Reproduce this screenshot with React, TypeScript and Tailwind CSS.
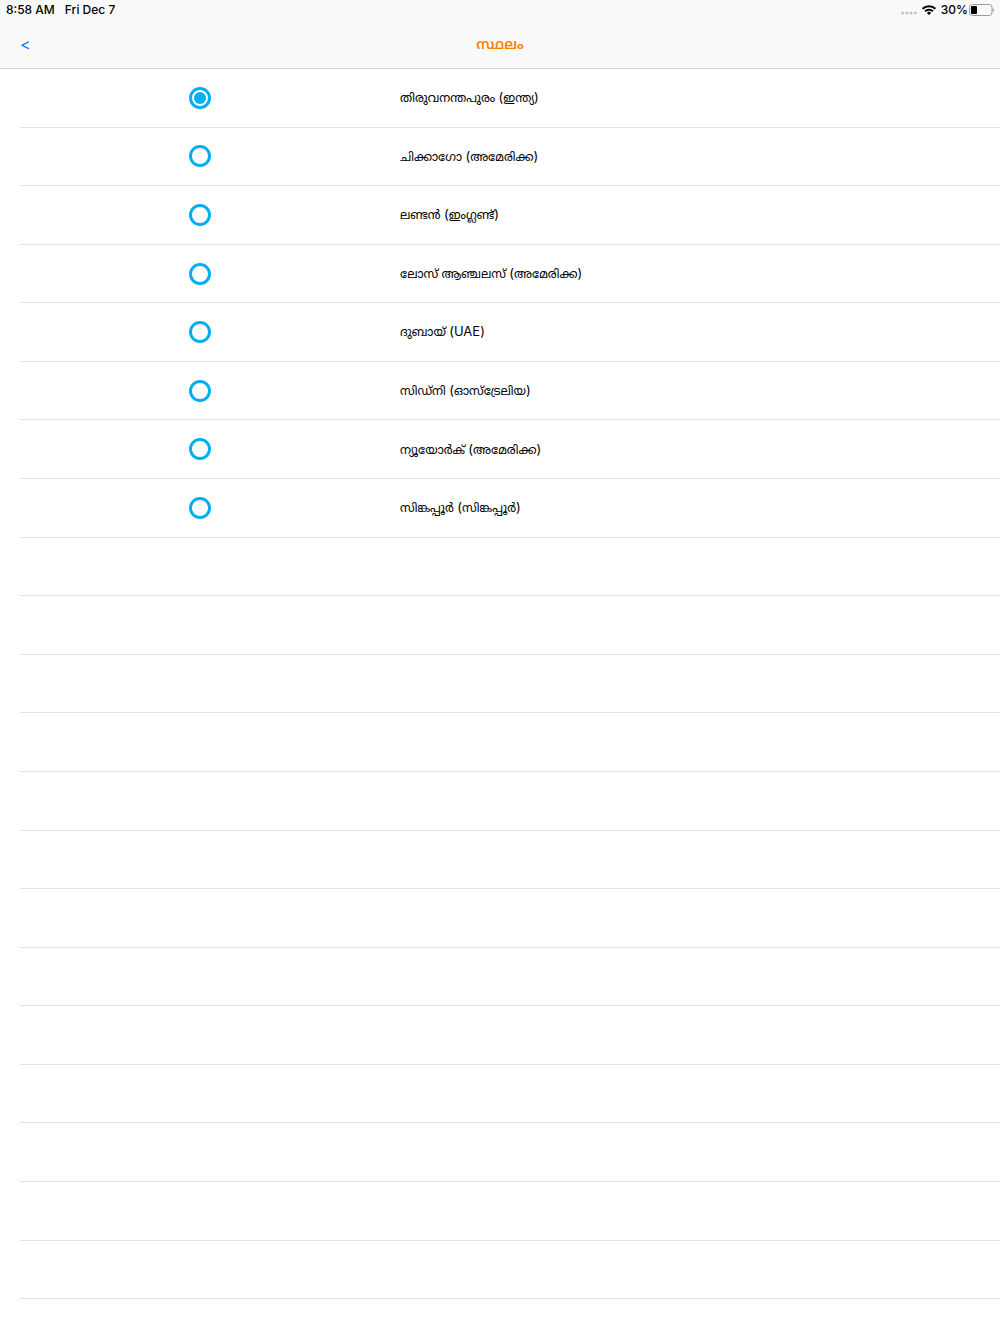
import { useState } from 'react';

const places = [
  { city: 'തിരുവനന്തപുരം', country: 'ഇന്ത്യ' },
  { city: 'ചിക്കാഗോ', country: 'അമേരിക്ക' },
  { city: 'ലണ്ടൻ', country: 'ഇംഗ്ലണ്ട്' },
  { city: 'ലോസ് ആഞ്ചലസ്', country: 'അമേരിക്ക' },
  { city: 'ദുബായ്', country: 'UAE', latin: true },
  { city: 'സിഡ്നി', country: 'ഓസ്ട്രേലിയ' },
  { city: 'ന്യൂയോർക്', country: 'അമേരിക്ക' },
  { city: 'സിങ്കപ്പൂർ', country: 'സിങ്കപ്പൂർ' },
];

const ROW_COUNT = 21;

const StatusBar = () => (
  <div className="flex h-5 items-center justify-between px-1.5 text-xs font-medium text-black">
    <div className="flex gap-2.5">
      <span>8:58 AM</span>
      <span>Fri Dec 7</span>
    </div>
    <div className="flex items-center gap-1">
      <svg className="mt-1.5 h-1 w-4" viewBox="0 0 16 4" fill="#c4c4c4">
        <circle cx="1.7" cy="2" r="1.6" />
        <circle cx="5.9" cy="2" r="1.6" />
        <circle cx="10.1" cy="2" r="1.6" />
        <circle cx="14.3" cy="2" r="1.6" />
      </svg>
      <svg className="h-2.5 w-4" viewBox="0 0 16 10" fill="none" stroke="#000" strokeWidth="1.9">
        <path d="M1.6 3.8a9.2 9.2 0 0 1 12.8 0" />
        <path d="M4.1 6.3a5.6 5.6 0 0 1 7.8 0" />
        <path d="M8 10 5.9 7.9a3 3 0 0 1 4.2 0z" fill="#000" stroke="none" />
      </svg>
      <div className="flex items-center gap-px">
        <span>30%</span>
        <svg className="h-3 w-[25px]" viewBox="0 0 25 12">
          <rect x="0.5" y="0.5" width="22.5" height="11" rx="2.8" fill="none" stroke="#9a9a9a" />
          <rect x="2" y="2" width="6" height="8" rx="1" fill="#000" />
          <path d="M23.8 4.2c1 .4 1.2 1 1.2 1.8s-.2 1.4-1.2 1.8z" fill="#9a9a9a" />
        </svg>
      </div>
    </div>
  </div>
);

export default function App() {
  const [selected, setSelected] = useState(0);

  return (
    <div className="flex min-h-screen flex-col bg-white font-[Inter,'Noto_Sans_Malayalam','Noto_Sans',sans-serif]">
      <header className="border-b border-[#d5d5d5] bg-[#f9f9f9]">
        <StatusBar />
        <nav className="grid h-12 grid-cols-[1fr_auto_1fr] items-center px-5">
          <button type="button" className="justify-self-start text-base text-[#0a7cff]">
            &lt;
          </button>
          <h1 className="text-sm font-semibold text-[#ff8000]">സ്ഥലം</h1>
        </nav>
      </header>

      <ul className="flex flex-1 flex-col pb-[35px]">
        {Array.from({ length: ROW_COUNT }, (_, i) => {
          const place = places[i];
          return (
            <li key={i} className="ml-5 flex min-h-12 flex-1 basis-0 border-b border-[#e2e2e2]">
              {place && (
                <label className="-ml-5 grid flex-1 grid-cols-[2fr_3fr] items-center text-xs text-black">
                  <input
                    type="radio"
                    name="place"
                    checked={selected === i}
                    onChange={() => setSelected(i)}
                    className="size-[22px] appearance-none justify-self-center rounded-full border-3 border-[#03aff3] bg-clip-content p-0.5 checked:bg-[#03aff3]"
                  />
                  <span>
                    {place.city}{' '}
                    <span className="text-[13px]">
                      (<span className={place.latin ? 'text-[13px]' : 'text-xs'}>{place.country}</span>)
                    </span>
                  </span>
                </label>
              )}
            </li>
          );
        })}
      </ul>
    </div>
  );
}
